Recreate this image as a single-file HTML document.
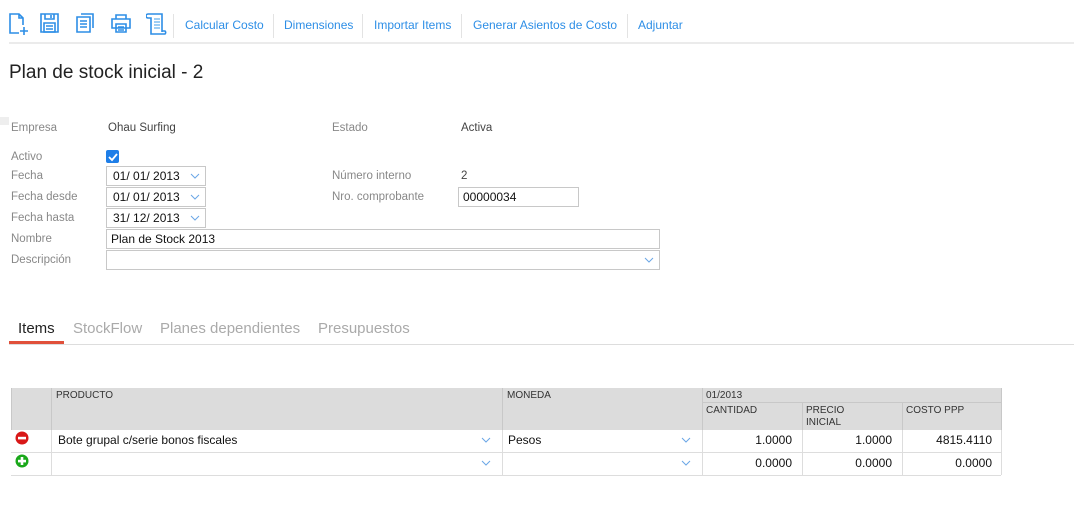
<!DOCTYPE html>
<html><head><meta charset="utf-8"><style>
*{margin:0;padding:0;box-sizing:border-box}
body{width:1074px;height:508px;background:#fff;position:relative;overflow:hidden;font-family:"Liberation Sans",sans-serif;font-size:12px;color:#333}
.a{position:absolute;white-space:nowrap}
.tb{color:#2d8ee6;font-size:12px;top:18px}
.sep{position:absolute;top:14px;width:1px;height:24px;background:#e3e3e3}
.lb{color:#888;font-size:11.5px;left:11px}
.v{color:#444;font-size:11.5px}
.in{position:absolute;border:1px solid #c8c8c8;height:20px;background:#fff;font-size:12px;color:#111;padding:2px 6px;line-height:15px}
.chev{position:absolute;right:5px;top:6px}
.r{text-align:right}
</style></head><body>
<svg class="a" style="left:9px;top:13px" width="20" height="22" viewBox="0 0 20 22" fill="none" stroke="#2d8ee6" stroke-width="1.6"><path d="M10 20H1V1h9l4 4v7"/><path d="M10 1v4h4"/><path d="M15 14v8M11 18h8"/></svg>
<svg class="a" style="left:40px;top:13px" width="19" height="20" viewBox="0 0 19 20" fill="none" stroke="#2d8ee6" stroke-width="1.6"><path d="M1 1h17v18H1z"/><path d="M5 1v5h9V1M11 2v3"/><path d="M4 10h11v9H4zM6 13h7M6 16h7"/></svg>
<svg class="a" style="left:76px;top:13px" width="18" height="20" viewBox="0 0 18 20" fill="none" stroke="#2d8ee6" stroke-width="1.6"><path d="M5 1h12v14"/><path d="M1 4h13v15H1z"/><path d="M4 8h7M4 11h7M4 14h7"/></svg>
<svg class="a" style="left:111px;top:14px" width="20" height="19" viewBox="0 0 20 19" fill="none" stroke="#2d8ee6" stroke-width="1.6"><path d="M5 5V1h10v4"/><path d="M1 5h18v9H1z"/><path d="M5 10h10v8H5zM7 13h6M7 16h6"/></svg>
<svg class="a" style="left:146px;top:13px" width="22" height="22" viewBox="0 0 22 22" fill="none" stroke="#2d8ee6" stroke-width="1.6"><path d="M2 1h14v18M2 1a2 2 0 0 0 0 4h3v16h14a2 2 0 0 0 0-3h-3"/><path d="M8 6h6M8 9h6M8 12h6M8 15h6" stroke="#7fbdf0"/></svg>
<div class="sep" style="left:173px"></div>
<div class="a tb" style="left:185px">Calcular Costo</div>
<div class="sep" style="left:273px"></div>
<div class="a tb" style="left:284px">Dimensiones</div>
<div class="sep" style="left:362px"></div>
<div class="a tb" style="left:374px">Importar Items</div>
<div class="sep" style="left:461px"></div>
<div class="a tb" style="left:473px">Generar Asientos de Costo</div>
<div class="sep" style="left:627px"></div>
<div class="a tb" style="left:638px">Adjuntar</div>
<div class="a" style="left:9px;top:42px;width:1065px;height:2px;background:#ebebeb"></div>
<div class="a" style="left:9px;top:62px;font-size:19px;color:#222">Plan de stock inicial - 2</div>
<div class="a" style="left:0;top:117px;width:9px;height:8px;background:#eee"></div>

<div class="a lb" style="top:122px">Empresa</div><div class="a v" style="left:108px;top:122px">Ohau Surfing</div>
<div class="a lb" style="left:332px;top:122px">Estado</div><div class="a v" style="left:461px;top:122px">Activa</div>
<div class="a lb" style="top:151px">Activo</div>
<div class="a" style="left:106px;top:150px;width:13px;height:13px;background:#1e7ee8;border-radius:2px"><svg width="13" height="13"><path d="M3 7l3 3 5-6" stroke="#fff" stroke-width="1.8" fill="none"/></svg></div>
<div class="a lb" style="top:170px">Fecha</div>
<div class="a lb" style="top:191px">Fecha desde</div>
<div class="a lb" style="top:212px">Fecha hasta</div>
<div class="a lb" style="top:233px">Nombre</div>
<div class="a lb" style="top:254px">Descripción</div>
<div class="a lb" style="left:332px;top:170px">Número interno</div><div class="a v" style="left:461px;top:170px">2</div>
<div class="a lb" style="left:332px;top:191px">Nro. comprobante</div>

<div class="in" style="left:106px;top:166px;width:100px">01/ 01/ 2013<svg class="chev" width="10" height="6"><path d="M1 1l4 4 4-4" stroke="#6aa6e6" fill="none"/></svg></div>
<div class="in" style="left:106px;top:187px;width:100px">01/ 01/ 2013<svg class="chev" width="10" height="6"><path d="M1 1l4 4 4-4" stroke="#6aa6e6" fill="none"/></svg></div>
<div class="in" style="left:106px;top:208px;width:100px">31/ 12/ 2013<svg class="chev" width="10" height="6"><path d="M1 1l4 4 4-4" stroke="#6aa6e6" fill="none"/></svg></div>
<div class="in" style="left:458px;top:187px;width:121px;padding-left:4px">00000034</div>
<div class="in" style="left:106px;top:229px;width:554px;padding-left:4px">Plan de Stock 2013</div>
<div class="in" style="left:106px;top:250px;width:554px"><svg class="chev" width="10" height="6"><path d="M1 1l4 4 4-4" stroke="#6aa6e6" fill="none"/></svg></div>

<div class="a" style="left:18px;top:320px;font-size:15px;color:#222">Items</div>
<div class="a" style="left:73px;top:320px;font-size:15px;color:#aaa">StockFlow</div>
<div class="a" style="left:160px;top:320px;font-size:15px;color:#aaa">Planes dependientes</div>
<div class="a" style="left:318px;top:320px;font-size:15px;color:#aaa">Presupuestos</div>
<div class="a" style="left:9px;top:344px;width:1065px;height:1px;background:#ddd"></div>
<div class="a" style="left:9px;top:341px;width:55px;height:3px;background:#e0503a"></div>

<div class="a" style="left:11px;top:388px;width:990px;height:42px;background:#dcdcdc"></div>
<div class="a" style="left:51px;top:388px;width:1px;height:42px;background:#c8c8c8"></div>
<div class="a" style="left:502px;top:388px;width:1px;height:42px;background:#c8c8c8"></div>
<div class="a" style="left:702px;top:388px;width:1px;height:42px;background:#c8c8c8"></div>
<div class="a" style="left:802px;top:402px;width:1px;height:28px;background:#c8c8c8"></div>
<div class="a" style="left:902px;top:402px;width:1px;height:28px;background:#c8c8c8"></div>
<div class="a" style="left:702px;top:402px;width:299px;height:1px;background:#c8c8c8"></div>
<div class="a" style="left:1001px;top:388px;width:1px;height:42px;background:#c8c8c8"></div>
<div class="a" style="left:11px;top:388px;width:1px;height:42px;background:#c8c8c8"></div>
<div class="a" style="left:56px;top:390px;font-size:10px;color:#333">PRODUCTO</div>
<div class="a" style="left:507px;top:390px;font-size:10px;color:#333">MONEDA</div>
<div class="a" style="left:706px;top:390px;font-size:10px;color:#333">01/2013</div>
<div class="a" style="left:706px;top:405px;font-size:10px;color:#333">CANTIDAD</div>
<div class="a" style="left:806px;top:405px;font-size:10px;color:#333;line-height:12px">PRECIO<br>INICIAL</div>
<div class="a" style="left:906px;top:405px;font-size:10px;color:#333">COSTO PPP</div>

<div class="a" style="left:11px;top:452px;width:990px;height:1px;background:#ddd"></div>
<div class="a" style="left:11px;top:475px;width:990px;height:1px;background:#ddd"></div>
<div class="a" style="left:51px;top:430px;width:1px;height:45px;background:#ddd"></div>
<div class="a" style="left:502px;top:430px;width:1px;height:45px;background:#ddd"></div>
<div class="a" style="left:702px;top:430px;width:1px;height:45px;background:#ddd"></div>
<div class="a" style="left:802px;top:430px;width:1px;height:45px;background:#ddd"></div>
<div class="a" style="left:902px;top:430px;width:1px;height:45px;background:#ddd"></div>
<div class="a" style="left:1001px;top:430px;width:1px;height:45px;background:#ddd"></div>

<svg class="a" style="left:15px;top:431px" width="14" height="14"><circle cx="7" cy="7" r="6.5" fill="#d81818"/><rect x="3" y="5.8" width="8" height="2.6" fill="#fff"/></svg>
<svg class="a" style="left:15px;top:454px" width="14" height="14"><circle cx="7" cy="7" r="6.5" fill="#1aa81a"/><rect x="3" y="5.8" width="8" height="2.6" fill="#fff"/><rect x="5.7" y="3" width="2.6" height="8" fill="#fff"/></svg>

<div class="a" style="left:58px;top:433px;color:#111">Bote grupal c/serie bonos fiscales</div>
<div class="a" style="left:508px;top:433px;color:#111">Pesos</div>
<svg class="a" style="left:481px;top:437px" width="10" height="6"><path d="M1 1l4 4 4-4" stroke="#6aa6e6" fill="none"/></svg>
<svg class="a" style="left:681px;top:437px" width="10" height="6"><path d="M1 1l4 4 4-4" stroke="#6aa6e6" fill="none"/></svg>
<svg class="a" style="left:481px;top:460px" width="10" height="6"><path d="M1 1l4 4 4-4" stroke="#6aa6e6" fill="none"/></svg>
<svg class="a" style="left:681px;top:460px" width="10" height="6"><path d="M1 1l4 4 4-4" stroke="#6aa6e6" fill="none"/></svg>
<div class="a r" style="left:702px;width:90px;top:433px;color:#111">1.0000</div>
<div class="a r" style="left:802px;width:90px;top:433px;color:#111">1.0000</div>
<div class="a r" style="left:902px;width:90px;top:433px;color:#111">4815.4110</div>
<div class="a r" style="left:702px;width:90px;top:456px;color:#111">0.0000</div>
<div class="a r" style="left:802px;width:90px;top:456px;color:#111">0.0000</div>
<div class="a r" style="left:902px;width:90px;top:456px;color:#111">0.0000</div>
</body></html>
